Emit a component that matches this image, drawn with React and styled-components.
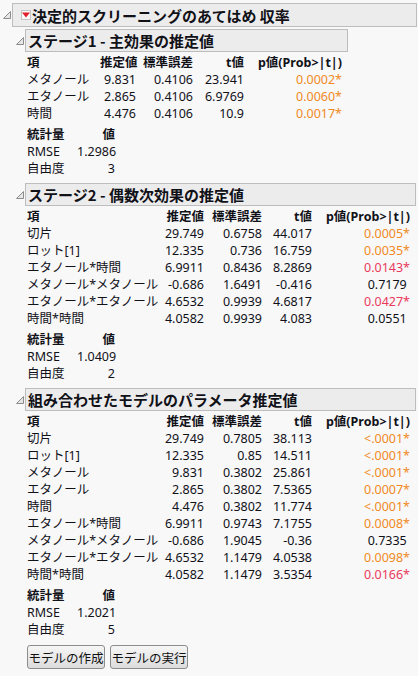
import React from 'react';
import styled, { createGlobalStyle } from 'styled-components';

const GlobalStyle = createGlobalStyle`
    body {
        margin: 0;
        background: #f8f8f8;
        color: #111118;
        font-family: "Noto Sans", "Noto Sans CJK JP", sans-serif;
        font-size: 12.5px;
    }
`;

const Root = styled.div`
    padding: 3px 1px 0 3px;
`;

const Outline = styled.div`
    width: ${(p) => (p.$fit ? 'fit-content' : 'auto')};
    margin-bottom: ${(p) => p.$gap || 0}px;
`;

const OutlineHead = styled.div`
    display: flex;
    align-items: center;
`;

const ToggleBox = styled.div`
    width: 9px;
    flex: none;
    display: flex;
    align-items: center;
`;

const HeadBox = styled.div`
    flex: 1;
    display: flex;
    align-items: center;
    gap: 1px;
    height: ${(p) => p.$h}px;
    box-sizing: border-box;
    padding-left: ${(p) => p.$pad}px;
    background: #ececec;
    border: 1px solid #bdbdbd;
    font-family: "Noto Sans CJK JP", sans-serif;
    font-weight: bold;
    font-size: 15px;
    white-space: nowrap;
`;

const MenuBtn = styled.span`
    width: 10px;
    height: 10px;
    box-sizing: border-box;
    border: 1px solid #c4c4c4;
    background: #fafafa;
    display: flex;
    align-items: center;
    justify-content: center;
`;

const Body = styled.div`
    padding: ${(p) => p.$pad};
`;

const Grid = styled.div`
    display: grid;
    grid-template-columns: ${(p) => p.$cols};
    line-height: 17px;
    margin-bottom: ${(p) => p.$gap || 0}px;
    white-space: nowrap;
`;

const Cell = styled.div`
    text-align: ${(p) => (p.$right ? 'right' : 'left')};
    font-weight: ${(p) => (p.$bold ? 'bold' : 'normal')};
    color: ${(p) => p.$color || 'inherit'};
`;

const Buttons = styled.div`
    display: flex;
    gap: 5px;
    margin-top: 7px;
`;

const Button = styled.button`
    height: 24px;
    width: 78px;
    padding: 0;
    border: 1px solid #8c8c8c;
    border-radius: 3px;
    background: linear-gradient(#f6f6f6, #dcdcdc);
    font-family: "Noto Sans CJK JP", sans-serif;
    font-size: 12.5px;
    color: #111;
`;

const ORANGE = '#f08a24';
const RED = '#ea3a5c';

const Toggle = () => (
    <ToggleBox>
        <svg width="8" height="8" viewBox="0 0 8 8">
            <polygon points="0.5,7.5 7.5,0.5 7.5,7.5" fill="#e6e6e6" stroke="#8c8c8c" strokeWidth="1" />
        </svg>
    </ToggleBox>
);

const pColor = (p) => {
    if (p.startsWith('<')) return ORANGE;
    const v = parseFloat(p);
    if (v < 0.01) return ORANGE;
    if (v < 0.05) return RED;
    return null;
};

const HEAD = ['項', '推定値', '標準誤差', 't値', 'p値(Prob>|t|)'];

const EstTable = ({ cols, rows }) => (
    <Grid $cols={cols} $gap={4}>
        {HEAD.map((h, i) => (
            <Cell key={h} $bold $right={i > 0}>{h}</Cell>
        ))}
        {rows.map((r) => {
            const c = pColor(r[4]);
            return (
                <React.Fragment key={r[0]}>
                    <Cell>{r[0]}</Cell>
                    <Cell $right>{r[1]}</Cell>
                    <Cell $right>{r[2]}</Cell>
                    <Cell $right>{r[3]}</Cell>
                    <Cell $right $color={c}>{r[4]}{c ? '*' : '\u00a0'}</Cell>
                </React.Fragment>
            );
        })}
    </Grid>
);

const StatTable = ({ rmse, df }) => (
    <Grid $cols="50px 38px">
        <Cell $bold>統計量</Cell>
        <Cell $bold $right>値</Cell>
        <Cell>RMSE</Cell>
        <Cell $right>{rmse}</Cell>
        <Cell>自由度</Cell>
        <Cell $right>{df}</Cell>
    </Grid>
);

const Stage = ({ title, gap, children }) => (
    <Outline $fit $gap={gap}>
        <OutlineHead>
            <Toggle />
            <HeadBox $h={23} $pad={2}>{title}</HeadBox>
        </OutlineHead>
        <Body $pad="2px 6px 0 11px">{children}</Body>
    </Outline>
);

const stage1 = [
    ['メタノール', '9.831', '0.4106', '23.941', '0.0002'],
    ['エタノール', '2.865', '0.4106', '6.9769', '0.0060'],
    ['時間', '4.476', '0.4106', '10.9', '0.0017'],
];

const stage2 = [
    ['切片', '29.749', '0.6758', '44.017', '0.0005'],
    ['ロット[1]', '12.335', '0.736', '16.759', '0.0035'],
    ['エタノール*時間', '6.9911', '0.8436', '8.2869', '0.0143'],
    ['メタノール*メタノール', '-0.686', '1.6491', '-0.416', '0.7179'],
    ['エタノール*エタノール', '4.6532', '0.9939', '4.6817', '0.0427'],
    ['時間*時間', '4.0582', '0.9939', '4.083', '0.0551'],
];

const stage3 = [
    ['切片', '29.749', '0.7805', '38.113', '<.0001'],
    ['ロット[1]', '12.335', '0.85', '14.511', '<.0001'],
    ['メタノール', '9.831', '0.3802', '25.861', '<.0001'],
    ['エタノール', '2.865', '0.3802', '7.5365', '0.0007'],
    ['時間', '4.476', '0.3802', '11.774', '<.0001'],
    ['エタノール*時間', '6.9911', '0.9743', '7.1755', '0.0008'],
    ['メタノール*メタノール', '-0.686', '1.9045', '-0.36', '0.7335'],
    ['エタノール*エタノール', '4.6532', '1.1479', '4.0538', '0.0098'],
    ['時間*時間', '4.0582', '1.1479', '3.5354', '0.0166'],
];

const App = () => (
    <Root>
        <GlobalStyle />
        <Outline>
            <OutlineHead>
                <Toggle />
                <HeadBox $h={24} $pad={8}>
                    <MenuBtn>
                        <svg width="8" height="6" viewBox="0 0 8 6">
                            <polygon points="0,0.5 8,0.5 4,5.5" fill="#e0202a" />
                        </svg>
                    </MenuBtn>
                    決定的スクリーニングのあてはめ 収率
                </HeadBox>
            </OutlineHead>
            <Body $pad="2px 0 0 13px">
                <Stage title="ステージ1 - 主効果の推定値" gap={6}>
                    <EstTable cols="73px 36px 57px 51px 98px" rows={stage1} />
                    <StatTable rmse="1.2986" df="3" />
                </Stage>
                <Stage title="ステージ2 - 偶数次効果の推定値" gap={6}>
                    <EstTable cols="120px 57px 58px 50px 98px" rows={stage2} />
                    <StatTable rmse="1.0409" df="2" />
                </Stage>
                <Stage title="組み合わせたモデルのパラメータ推定値">
                    <EstTable cols="120px 57px 58px 50px 98px" rows={stage3} />
                    <StatTable rmse="1.2021" df="5" />
                    <Buttons>
                        <Button>モデルの作成</Button>
                        <Button>モデルの実行</Button>
                    </Buttons>
                </Stage>
            </Body>
        </Outline>
    </Root>
);

export default App;
